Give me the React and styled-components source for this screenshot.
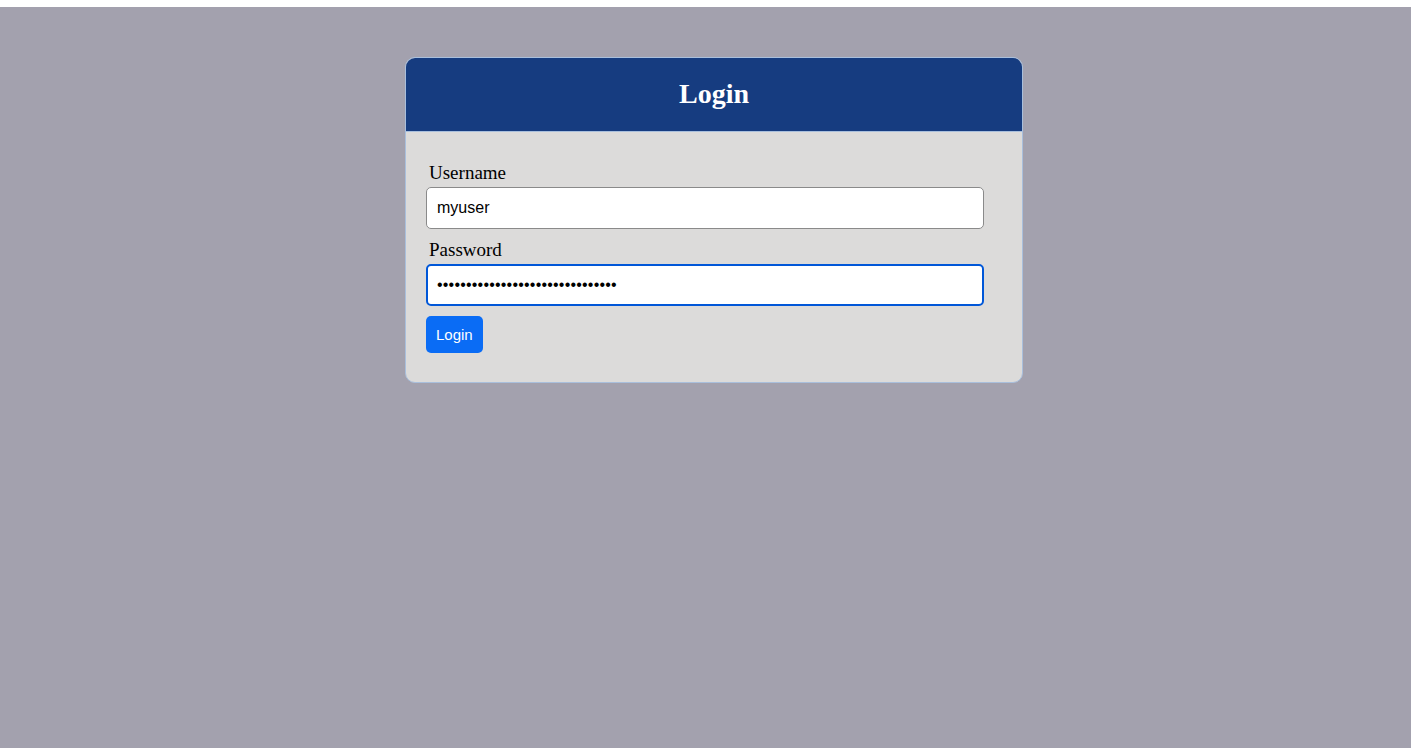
import React from "react";
import styled, { createGlobalStyle } from "styled-components";

const Global = createGlobalStyle`
  html, body { margin: 0; padding: 0; }
  body { background: #a3a1ae; font-family: "Liberation Serif", "Times New Roman", serif; }
`;

const TopStrip = styled.div`
  height: 7px;
  background: #ffffff;
`;

const Page = styled.main`
  min-height: 741px;
  display: flex;
  justify-content: center;
  align-items: flex-start;
  padding-top: 50px;
  padding-left: 17px;
  box-sizing: border-box;
  background: #a3a1ae;
`;

const Card = styled.section`
  width: 618px;
  box-sizing: border-box;
  border: 1px solid #a9bfdc;
  border-radius: 10px;
  overflow: hidden;
  background: #dcdbda;
`;

const Header = styled.header`
  height: 73px;
  background: #163c80;
  border-bottom: 1px solid #a9bfdc;
  display: flex;
  align-items: center;
  justify-content: center;
`;

const Title = styled.h1`
  margin: 0;
  color: #ffffff;
  font-family: "Liberation Serif", "Times New Roman", serif;
  font-weight: bold;
  font-size: 28px;
  transform: translateY(-1px);
`;

const Form = styled.form`
  padding: 30px 20px 29px 20px;
  display: flex;
  flex-direction: column;
`;

const Label = styled.label`
  font-family: "Liberation Serif", "Times New Roman", serif;
  font-size: 19px;
  color: #000;
  padding-left: 3px;
  line-height: 22px;
  margin-bottom: 3px;
  margin-top: ${(p) => (p.$first ? "0" : "10px")};
`;

const Input = styled.input`
  width: 558px;
  height: 42px;
  box-sizing: border-box;
  border: ${(p) => (p.$focused ? "2px solid #0057d8" : "1px solid #8a8a8a")};
  border-radius: 5px;
  background: #ffffff;
  padding: ${(p) => (p.$focused ? "0 9px" : "0 10px")};
  font-family: "Liberation Sans", Arial, sans-serif;
  font-size: 16px;
  letter-spacing: ${(p) => (p.type === "password" ? "0.2px" : "normal")};
  color: #000;
  outline: none;
`;

const Button = styled.button`
  align-self: flex-start;
  margin-top: 10px;
  height: 37px;
  padding: 0 10px;
  border: none;
  border-radius: 5px;
  background: #0a6cf5;
  color: #ffffff;
  font-family: "Liberation Sans", Arial, sans-serif;
  font-size: 15px;
  cursor: pointer;
`;

export default function App() {
  return (
    <>
      <Global />
      <TopStrip />
      <Page>
        <Card>
          <Header>
            <Title>Login</Title>
          </Header>
          <Form onSubmit={(e) => e.preventDefault()}>
            <Label $first htmlFor="username">Username</Label>
            <Input id="username" type="text" defaultValue="myuser" />
            <Label htmlFor="password">Password</Label>
            <Input
              id="password"
              type="password"
              $focused
              defaultValue="•••••••••••••••••••••••••••••••"
            />
            <Button type="submit">Login</Button>
          </Form>
        </Card>
      </Page>
    </>
  );
}
